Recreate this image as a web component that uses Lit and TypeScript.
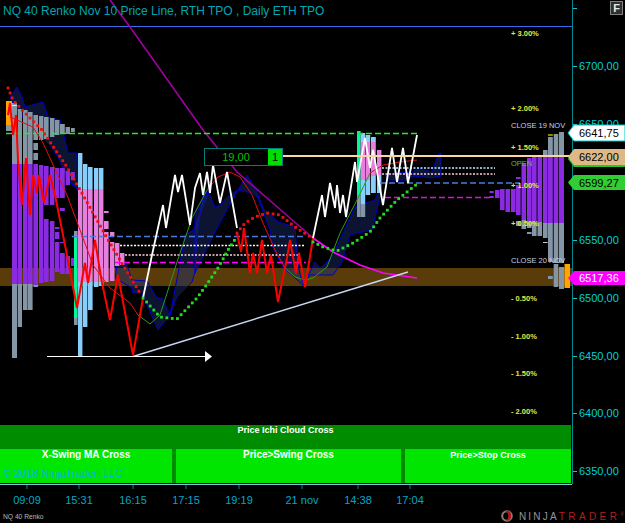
import { LitElement, html, svg, css } from 'lit';
import { customElement } from 'lit/decorators.js';

type Pt = [number, number];

const line = (p: Pt[]) => p.map((q) => q.join(',')).join(' ');

// dots spaced evenly along a polyline
function dotsAlong(p: Pt[], step: number): Pt[] {
  const out: Pt[] = [];
  let left = 0;
  for (let i = 1; i < p.length; i++) {
    const dx = p[i][0] - p[i - 1][0];
    const dy = p[i][1] - p[i - 1][1];
    const len = Math.hypot(dx, dy);
    let d = left;
    while (d < len) {
      out.push([p[i - 1][0] + (dx * d) / len, p[i - 1][1] + (dy * d) / len]);
      d += step;
    }
    left = d - len;
  }
  return out;
}

const GRAY = '#8495a5';
const PUR = '#8a2be2';
const SKY = '#87cefa';
const PINK = '#e67fde';
const ORG = '#ffa500';
const MINT = '#00fa9a';

// x, width, then segments [y1, y2, colour]
type Seg = [number, number, string];
type Bar = { x: number; w: number; y: number; h: number; fill: string };
const col = (x: number, w: number, segs: Seg[]): Bar[] =>
  segs.map((s) => ({ x, w, y: s[0], h: s[1] - s[0], fill: s[2] }));

const bars: Bar[] = [
  ...col(6, 6, [[101, 125, ORG], [125, 131, GRAY]]),
  ...col(12, 5, [[103, 164, GRAY], [164, 284, PUR], [284, 358, GRAY]]),
  ...col(17.7, 4.3, [[109, 164, GRAY], [164, 284, PUR], [284, 327, GRAY]]),
  ...col(23, 4.6, [[110, 164, GRAY], [164, 284, PUR], [284, 310, GRAY]]),
  ...col(28, 4.6, [[112, 164, GRAY], [164, 284, PUR], [284, 310, GRAY]]),
  ...col(33.4, 4.6, [[115, 140, GRAY], [143, 150, GRAY], [153, 160, GRAY], [164, 285, PUR], [285, 287, GRAY]]),
  ...col(39, 4.4, [[116, 140, GRAY], [165, 283, PUR]]),
  ...col(44, 4.6, [[117, 139, GRAY], [166, 205, PUR], [219, 282, PUR]]),
  ...col(50, 4.4, [[118, 137, GRAY], [167, 205, PUR], [221, 281, PUR]]),
  ...col(55, 4.4, [[120, 135, GRAY], [168, 198, PUR], [227, 229, PUR], [232, 239, PUR], [242, 272, PUR]]),
  ...col(60, 4.8, [[124, 134, GRAY], [168, 198, PUR], [208, 211, PUR], [242, 243, PUR], [253, 274, PUR]]),
  ...col(65.6, 4.4, [[127, 134, GRAY], [171, 185, PUR], [256, 274, PUR]]),
  ...col(71, 3.8, [[128, 132, GRAY], [172, 180, PUR], [258, 266, PUR]]),
  // mint / sky-blue block
  ...col(74, 3.6, [[231, 235, GRAY], [235, 318, MINT], [318, 325, GRAY]]),
  ...col(78, 4.4, [[153, 189, SKY], [189, 282, PINK], [282, 357, SKY]]),
  ...col(83, 4.4, [[164, 189, SKY], [189, 282, PINK], [282, 327, SKY]]),
  ...col(88, 4.6, [[167, 189, SKY], [189, 282, PINK], [282, 310, SKY]]),
  ...col(94, 4.4, [[168, 189, SKY], [189, 282, PINK], [282, 287, SKY]]),
  ...col(99, 4.4, [[168, 189, SKY], [189, 282, PINK], [282, 286, SKY]]),
  ...col(104, 4.6, [[211, 213, PINK], [221, 229, PINK], [232, 282, PINK]]),
  ...col(110, 4.4, [[232, 237, PINK], [242, 281, PINK]]),
  ...col(115, 4.4, [[243, 266, PINK]]),
  ...col(120, 4.4, [[253, 265, PINK]]),
  // block at the top of the white line
  ...col(357, 3.6, [[131, 195, MINT], [195, 217, GRAY]]),
  ...col(360.6, 4.6, [[133, 142, SKY], [142, 180, PINK], [180, 204, SKY], [204, 217, GRAY]]),
  ...col(365.6, 4.6, [[135, 142, SKY], [142, 180, PINK], [180, 195, SKY]]),
  ...col(371, 4.8, [[137, 142, SKY], [142, 176, PINK], [176, 193, SKY]]),
  ...col(377, 4.4, [[150, 175, PINK], [175, 193, SKY]]),
  // right profile
  ...col(559, 5, [[132, 157, GRAY], [157, 223, PUR], [223, 263, GRAY], [267, 289, GRAY]]),
  ...col(553.7, 4.6, [[134, 157, GRAY], [157, 223, PUR], [223, 263, GRAY], [264, 287, GRAY]]),
  ...col(548, 4.8, [[134, 136, '#8a8a00'], [137, 157, GRAY], [157, 223, PUR], [223, 262, GRAY], [276, 279, GRAY]]),
  ...col(543, 4.6, [[150, 157, GRAY], [157, 223, PUR], [223, 238, GRAY], [242, 243, '#ccc']]),
  ...col(537.5, 4.6, [[157, 222, PUR], [222, 236, GRAY]]),
  ...col(532, 4.6, [[157, 222, PUR], [222, 236, GRAY]]),
  ...col(527, 4.6, [[158, 222, PUR], [222, 228, GRAY], [232, 234, GRAY]]),
  ...col(521.5, 4.6, [[163, 220, PUR], [220, 229, GRAY]]),
  ...col(516, 4.6, [[177, 179, PUR], [185, 215, PUR], [221, 226, GRAY]]),
  ...col(511, 4.6, [[189, 212, PUR]]),
  ...col(505.5, 4.6, [[189, 212, PUR]]),
  ...col(500, 4.6, [[189, 210, PUR]]),
  ...col(495, 4.6, [[190, 198, PUR]]),
  ...col(489.5, 4.2, [[191, 193, PUR], [196, 198, PUR]]),
  ...col(564.5, 5.5, [[264, 288, ORG]]),
];

const clouds: Pt[][] = [
  // top left
  [[10, 97], [17, 87], [22, 97], [25, 107], [43, 102], [48, 117], [60, 120], [68, 153], [77, 153], [78, 190], [68, 180], [58, 157], [50, 145], [30, 125], [15, 108]],
  // under the first white run
  [[117, 265], [127, 265], [132, 280], [147, 281], [157, 298], [162, 298], [170, 315], [177, 297], [192, 282], [195, 272], [197, 235], [203, 195], [210, 190], [193, 230], [185, 235], [180, 263], [170, 315], [158, 330], [147, 305], [142, 293], [133, 293], [132, 288], [115, 278]],
  [[195, 215], [205, 195], [210, 195], [215, 207], [220, 205], [227, 197], [233, 193], [238, 190], [228, 208], [215, 232], [195, 273]],
  [[238, 190], [247, 175], [252, 183], [257, 192], [263, 208], [278, 222], [295, 227], [297, 255], [300, 275], [305, 287], [295, 278], [283, 267], [273, 248], [270, 230], [258, 198], [252, 193]],
  // under the second white run
  [[303, 285], [312, 268], [315, 262], [320, 268], [327, 262], [333, 255], [342, 235], [355, 207], [365, 203], [375, 200], [380, 188], [380, 197], [372, 230], [357, 233], [350, 235], [342, 262], [333, 275], [310, 275]],
  [[385, 175], [400, 172], [412, 173], [418, 168], [425, 170], [432, 172], [438, 155], [441, 153], [441, 176], [430, 178], [415, 176], [405, 180], [388, 180]],
];

const priceLine: Pt[][] = [
  [[8, 115], [10, 103], [13, 135], [16, 115], [18, 160], [22, 205], [26, 158], [30, 215], [33, 175], [37, 193], [39, 175], [44, 203], [50, 175], [55, 195], [66, 250], [77, 308], [85, 263], [88, 283], [95, 240], [102, 283], [110, 320], [118, 275], [133, 355], [143, 298]],
  [[237, 233], [241, 252], [244, 228], [250, 273], [253, 253], [257, 273], [262, 240], [267, 273], [271, 255], [278, 302], [287, 258], [290, 240], [296, 273], [299, 253], [305, 287], [313, 238]],
];
const whiteLine: Pt[][] = [
  [[143, 298], [152, 255], [163, 205], [166, 228], [175, 175], [178, 192], [182, 175], [190, 225], [195, 188], [200, 173], [203, 195], [207, 172], [210, 193], [213, 165], [220, 203], [227, 172], [237, 228]],
  [[313, 238], [322, 195], [325, 217], [330, 183], [335, 208], [337, 185], [340, 213], [343, 195], [346, 217], [355, 162], [357, 182], [365, 138], [370, 168], [373, 150], [383, 205], [392, 148], [397, 182], [403, 148], [408, 183], [417, 135]],
];
const maRed: Pt[][] = [
  [[10, 117], [33, 127], [43, 143], [67, 195], [93, 265], [110, 288], [130, 303], [138, 315]],
  [[207, 190], [218, 177], [230, 172], [240, 177], [252, 195], [263, 223], [275, 250], [285, 268]],
  [[370, 173], [383, 165], [400, 162], [417, 160]],
];
const maGreen: Pt[][] = [
  [[138, 315], [150, 324], [160, 315], [177, 262], [192, 218], [207, 190]],
  [[285, 268], [295, 277], [305, 280], [313, 278], [327, 267], [340, 233], [357, 200], [370, 173]],
];
const dotsRed: Pt[][] = [
  [[8, 88], [13, 100], [25, 113], [42, 130], [67, 167], [83, 195], [107, 238], [123, 265], [140, 293]],
  [[237, 233], [245, 223], [255, 217], [267, 213], [280, 215], [295, 227], [312, 238]],
];
const dotsGreen: Pt[][] = [
  [[143, 298], [160, 317], [177, 319], [197, 298], [205, 287], [218, 268], [228, 250], [236, 238]],
  [[313, 242], [323, 247], [337, 251], [353, 243], [370, 232], [380, 218], [397, 200], [417, 184]],
];

const levels: [number, number, number, string, string][] = [
  [6, 418, 133.5, '#22ee22', '6 3'],
  [72, 305, 236.5, '#4a7be0', '6 3'],
  [120, 305, 245.5, '#ffffff', '2 1.5'],
  [125, 300, 255, '#ffd0e0', '2 1.5'],
  [115, 306, 262.5, '#ff00ff', '6 3'],
  [382, 495, 168, '#bfefff', '2 1.5'],
  [382, 495, 174, '#ffd0e0', '2 1.5'],
  [380, 520, 183, '#4a7be0', '6 3'],
  [385, 490, 197.5, '#e010e0', '6 3'],
];

const pct: [string, number][] = [
  ['+ 3.00%', 36], ['+ 2.00%', 111], ['+ 1.50%', 150], ['+ 1.00%', 188], ['+ 0.50%', 226],
  ['- 0.50%', 301], ['- 1.00%', 339], ['- 1.50%', 376], ['- 2.00%', 414],
];

const prices: [string, number][] = [
  ['6700,00', 66], ['6650,00', 124], ['6550,00', 240], ['6500,00', 298],
  ['6450,00', 356], ['6400,00', 413], ['6350,00', 471],
];

const tags: [string, number, number, string, string][] = [
  ['', 151, 16, '#22cc22', '#000'],
  ['6641,75', 125, 16, '#ffffff', '#000'],
  ['6622,00', 149, 16, '#deb887', '#000'],
  ['6599,27', 175, 15, '#32cd32', '#000'],
  ['6517,36', 271, 14, '#ff00ff', '#fff'],
];

const times: [string, number][] = [
  ['09:09', 27], ['15:31', 79], ['16:15', 133], ['17:15', 186], ['19:19', 239],
  ['21 nov', 302], ['14:38', 358], ['17:04', 410],
];

@customElement('app-root')
export class AppRoot extends LitElement {
  static styles = css`
:host {
  display: block;
  width: 625px;
  height: 523px;
  background: #000;
  font-family: "Liberation Sans", Arial, sans-serif;
  overflow: hidden;
  position: relative;
}

svg { display: block; }
svg text { font-family: "Liberation Sans", Arial, sans-serif; }

.main {
  display: grid;
  grid-template-columns: 572px 53px;
  height: 484px;
}

.left { display: flex; flex-direction: column; }
.plot { height: 424px; }

.strips {
  height: 58px;
  margin: 1px 1px 1px 0;
  background: #008c00;
  display: flex;
  flex-direction: column;
  color: #fff;
  font-size: 10px;
  font-weight: bold;
}
.strip-top { height: 23px; text-align: center; line-height: 11px; font-size: 9px; }
.strip-row { flex: 1; display: flex; gap: 4px; margin-top: 1px; }
.strip {
  position: relative;
  background: #00e600;
  text-align: center;
  line-height: 12px;
}
.s1 { width: 172px; }
.s2 { width: 225px; }
.s3 { flex: 1; font-size: 9px; }
.copy {
  position: absolute;
  left: 3px;
  top: 18px;
  font-size: 10.8px;
  font-weight: normal;
  color: #00b4e0;
  white-space: nowrap;
}

.axis { position: relative; overflow: visible; z-index: 2; }

.title { fill: #00a6b4; font-size: 12px; }
.pct { fill: #e6e640; font-size: 7.5px; font-weight: bold; }
.note { fill: #c4d2e8; font-size: 7.5px; }
.open { fill: #50c050; font-size: 7.5px; }
.price { fill: #00cfd8; font-size: 11px; }
.tag { font-size: 11px; }
.time { fill: #00a8c8; font-size: 11px; }
.order { font-size: 11px; fill: #00c000; }

.footer {
  display: flex;
  justify-content: space-between;
  align-items: center;
  padding: 1px 1px 0 3px;
  height: 15px;
  box-sizing: border-box;
  color: #b8b8b8;
  font-size: 6.7px;
}
.logo {
  display: flex;
  align-items: center;
  gap: 4px;
  font-size: 10px;
  color: #969696;
  white-space: nowrap;
}
.ninja { letter-spacing: 2.2px; }
.trader { letter-spacing: 3.4px; color: #b02020; }
.logo sup { font-size: 5px; line-height: 0; color: #b02020; vertical-align: 4px; }

.fbtn {
  position: absolute;
  right: 2px;
  top: 1px;
  width: 13px;
  height: 14px;
  box-sizing: border-box;
  border: 1px solid #808080;
  background: #303030;
  color: #e8e8e8;
  font-size: 11px;
  font-weight: bold;
  line-height: 12px;
  text-align: center;
  z-index: 3;
}
`;

  renderPlot() {
    return svg`
      <rect x="0" y="268" width="572" height="18" fill="#5a3c0a"></rect>
      ${clouds.map((c) => svg`<polygon points=${line(c)} fill="rgba(26,44,110,0.45)" stroke="#0000c8" stroke-width="1"></polygon>`)}
      ${bars.map((b) => svg`<rect x=${b.x} y=${b.y} width=${b.w} height=${b.h} fill=${b.fill}></rect>`)}
      <rect x="12" y="105" width="5" height="1" fill="#ffff00"></rect>
      <line x1="0" y1="26.5" x2="572" y2="26.5" stroke="#3a6cf0" stroke-width="1.200"></line>
      <polyline points="110,0 130,27 203,130 237,172 313,238" fill="none" stroke="#a000a0" stroke-width="1.6"></polyline>
      ${levels.map((l) => svg`<line x1=${l[0]} y1=${l[2]} x2=${l[1]} y2=${l[2]} stroke=${l[3]} stroke-width="1.5" stroke-dasharray=${l[4]}></line>`)}
      <polyline points="313,238 333,252 360,265 383,273 417,278" fill="none" stroke="#ff00ff" stroke-width="1.6"></polyline>
      <line x1="133" y1="356.5" x2="408" y2="272" stroke="#c8d8f0" stroke-width="1.4"></line>
      <line x1="47" y1="356.5" x2="206" y2="356.5" stroke="#fff" stroke-width="1"></line>
      <polygon points="205,351 212,356.5 205,362" fill="#fff"></polygon>
      ${maRed.map((p) => svg`<polyline points=${line(p)} fill="none" stroke="#e01010" stroke-width="1"></polyline>`)}
      ${maGreen.map((p) => svg`<polyline points=${line(p)} fill="none" stroke="#2e9a1e" stroke-width="1"></polyline>`)}
      ${priceLine.map((p) => svg`<polyline points=${line(p)} fill="none" stroke="#ff0000" stroke-width="2"></polyline>`)}
      ${whiteLine.map((p) => svg`<polyline points=${line(p)} fill="none" stroke="#ffffff" stroke-width="1.8"></polyline>`)}
      ${dotsRed.flatMap((p) => dotsAlong(p, 5.4)).map((d) => svg`<rect x=${d[0] - 1.4} y=${d[1] - 1.4} width="2.8" height="2.8" fill="#ee1010"></rect>`)}
      ${dotsGreen.flatMap((p) => dotsAlong(p, 5.4)).map((d) => svg`<rect x=${d[0] - 1.4} y=${d[1] - 1.4} width="2.8" height="2.8" fill="#22dd22"></rect>`)}
      <line x1="283" y1="156" x2="572" y2="156" stroke="#f8d8a0" stroke-width="2"></line>
      <rect x="204.5" y="148.5" width="78" height="17" fill="#000" stroke="#008080"></rect>
      <rect x="268" y="149" width="14" height="16" fill="#00dd00"></rect>
      <text class="order" x="236" y="161" text-anchor="middle">19,00</text>
      <text x="275" y="161" text-anchor="middle" font-size="11" fill="#000">1</text>
      ${pct.map((p) => svg`<text class="pct" x="511" y=${p[1]}>${p[0]}</text>`)}
      <text class="note" x="511" y="128">CLOSE 19 NOV</text>
      <text class="open" x="511" y="166">OPEN</text>
      <text class="note" x="511" y="263">CLOSE 20 NOV</text>
      <text class="title" x="3" y="14.500">NQ 40 Renko Nov 10 Price Line, RTH TPO , Daily ETH TPO</text>
    `;
  }

  renderAxis() {
    return svg`
      <line x1="0.5" y1="0" x2="0.5" y2="484" stroke="#008a90"></line>
      <line x1="1" y1="8.5" x2="5" y2="8.5" stroke="#00cfd8"></line>
      ${prices.map((p) => svg`
        <line x1="1" y1=${p[1] + 0.5} x2="5" y2=${p[1] + 0.5} stroke="#00cfd8"></line>
        <text class="price" x="7" y=${p[1] + 4}>${p[0]}</text>`)}
      ${tags.map((t) => svg`
        <polygon points="${-4},${t[1] + t[2] / 2} ${2},${t[1]} 53,${t[1]} 53,${t[1] + t[2]} ${2},${t[1] + t[2]}" fill=${t[3]} stroke=${t[3] === '#ffffff' ? '#00c8c8' : 'none'}></polygon>
        <text class="tag" x="7" y=${t[1] + t[2] / 2 + 4} fill=${t[4]}>${t[0]}</text>`)}
    `;
  }

  render() {
    return html`
      <div class="fbtn">F</div>
      <div class="main">
        <div class="left">
          <div class="plot">
            <svg width="572" height="424" viewBox="0 0 572 424">${this.renderPlot()}</svg>
          </div>
          <div class="strips">
            <div class="strip-top">Price Ichi Cloud Cross</div>
            <div class="strip-row">
              <div class="strip s1">X-Swing MA Cross<span class="copy">© 2018 NinjaTrader, LLC</span></div>
              <div class="strip s2">Price&gt;Swing Cross</div>
              <div class="strip s3">Price&gt;Stop Cross</div>
            </div>
          </div>
        </div>
        <svg class="axis" width="53" height="484" viewBox="0 0 53 484" overflow="visible">${this.renderAxis()}</svg>
      </div>
      <svg width="625" height="24" viewBox="0 484 625 24">
        <line x1="0" y1="484.5" x2="572" y2="484.5" stroke="#80c8d8"></line>
        ${times.map((t) => svg`
          <line x1=${t[1]} y1="485" x2=${t[1]} y2="489" stroke="#008a90"></line>
          <text class="time" x=${t[1]} y="504" text-anchor="middle">${t[0]}</text>`)}
      </svg>
      <div class="footer">
        <span>NQ 40 Renko</span>
        <span class="logo">
          <svg width="15" height="12" viewBox="0 0 15 12">
            <circle cx="7" cy="6" r="4.800" fill="none" stroke="#8a8070" stroke-width="2"></circle>
            <path d="M5 1 C9.500 2.500 9 8.500 6 11 L9 10.500 C12 8 12 3 8.500 .5 Z" fill="#b01818"></path>
          </svg>
          <span><span class="ninja">NINJA</span><span class="trader">TRADER</span><sup>®</sup></span>
        </span>
      </div>
    `;
  }
}

declare global {
  interface HTMLElementTagNameMap {
    'app-root': AppRoot;
  }
}
